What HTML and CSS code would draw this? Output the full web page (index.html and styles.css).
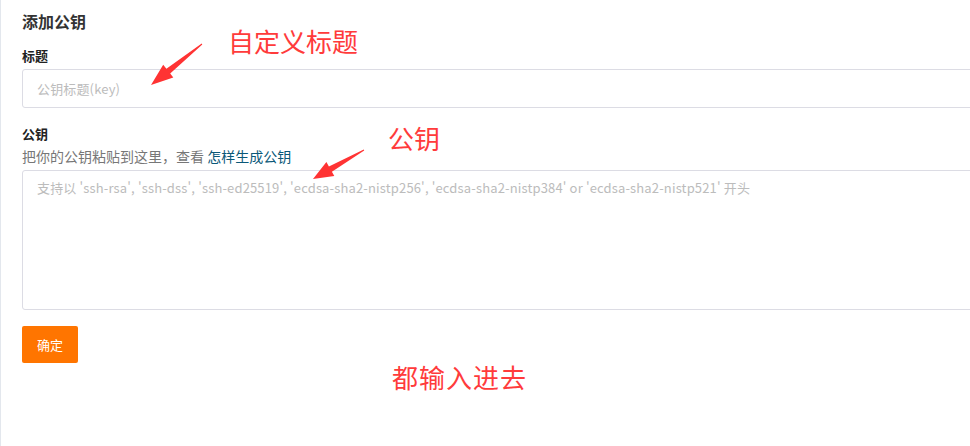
FILE: index.html
```html
<!DOCTYPE html>
<html lang="zh-CN">
<head>
    <meta charset="UTF-8">
    <title>添加公钥</title>
    <link rel="stylesheet" href="styles.css">
</head>
<body>
    <div class="panel">
        <h3 class="panel-title">添加公钥</h3>
        <form class="key-form">
            <div class="field">
                <label class="field-label">标题</label>
                <input class="text-input" type="text" placeholder="公钥标题(key)">
            </div>
            <div class="field field-key">
                <label class="field-label">公钥</label>
                <p class="field-hint">把你的公钥粘贴到这里，查看 <a href="#">怎样生成公钥</a></p>
                <textarea class="key-area" placeholder="支持以 'ssh-rsa', 'ssh-dss', 'ssh-ed25519', 'ecdsa-sha2-nistp256', 'ecdsa-sha2-nistp384' or 'ecdsa-sha2-nistp521' 开头"></textarea>
            </div>
            <button class="submit-btn" type="button">确定</button>
        </form>
    </div>

    <!-- annotations -->
    <span class="note note-title">自定义标题</span>
    <span class="note note-key">公钥</span>
    <span class="note note-all">都输入进去</span>
    <svg class="arrows" width="970" height="446" viewBox="0 0 970 446">
        <polygon fill="#ff3333" points="151,85 173.3,77.4 170.2,73.5 202.3,44.4 201.7,43.6 166.4,68.7 163.2,64.8"/>
        <polygon fill="#ff3333" points="313,179 334.3,176 331.9,171.7 364.2,150.4 363.8,149.6 328.9,166.5 326.4,162.1"/>
    </svg>
</body>
</html>
```

FILE: styles.css
```css
html, body {
    margin: 0;
    height: 100%;
    overflow: hidden;
    background: #fff;
}

body {
    font-family: "Noto Sans CJK SC", "Liberation Sans", sans-serif;
    color: #333;
    position: relative;
}

.panel {
    border-left: 1px solid #e3e7ed;
    padding: 9px 0 0 21px;
    width: 1000px;
    height: 100%;
    box-sizing: border-box;
}

.panel-title {
    margin: 0 0 15px;
    font-size: 16px;
    font-weight: bold;
    line-height: 24px;
    color: #333;
}

.field {
    margin-bottom: 18px;
}

.field-key {
    margin-bottom: 16px;
}

.field-label {
    display: block;
    font-size: 13px;
    font-weight: bold;
    line-height: 16px;
    color: #222;
    margin-bottom: 5px;
}

.field-hint {
    margin: 1px 0 5px;
    font-size: 14px;
    line-height: 18px;
    color: #777;
}

.field-hint a {
    color: #0a5878;
    text-decoration: none;
}

.text-input,
.key-area {
    display: block;
    width: 100%;
    box-sizing: border-box;
    border: 1px solid #dcdce4;
    border-radius: 3px;
    padding: 8px 14px;
    font-family: "Noto Sans CJK SC", "Liberation Sans", sans-serif;
    font-size: 13px;
    letter-spacing: 0.15px;
    background: #fff;
    outline: none;
}

.text-input {
    height: 39px;
}

.key-area {
    height: 140px;
    resize: vertical;
    line-height: 18px;
}

.text-input::placeholder,
.key-area::placeholder {
    color: #bcbcbc;
}

.submit-btn {
    width: 56px;
    height: 37px;
    background: #ff7500;
    color: #fff;
    border: none;
    border-radius: 2px;
    font-family: "Noto Sans CJK SC", sans-serif;
    font-size: 13px;
    cursor: pointer;
}

.note {
    position: absolute;
    color: #ff3b3b;
    font-size: 26px;
    line-height: 30px;
    white-space: nowrap;
}

.note-title { left: 228px; top: 26px; }
.note-key { left: 388px; top: 123px; }
.note-all { left: 392px; top: 362px; letter-spacing: 1px; }

.arrows {
    position: absolute;
    left: 0;
    top: 0;
    pointer-events: none;
}
```
